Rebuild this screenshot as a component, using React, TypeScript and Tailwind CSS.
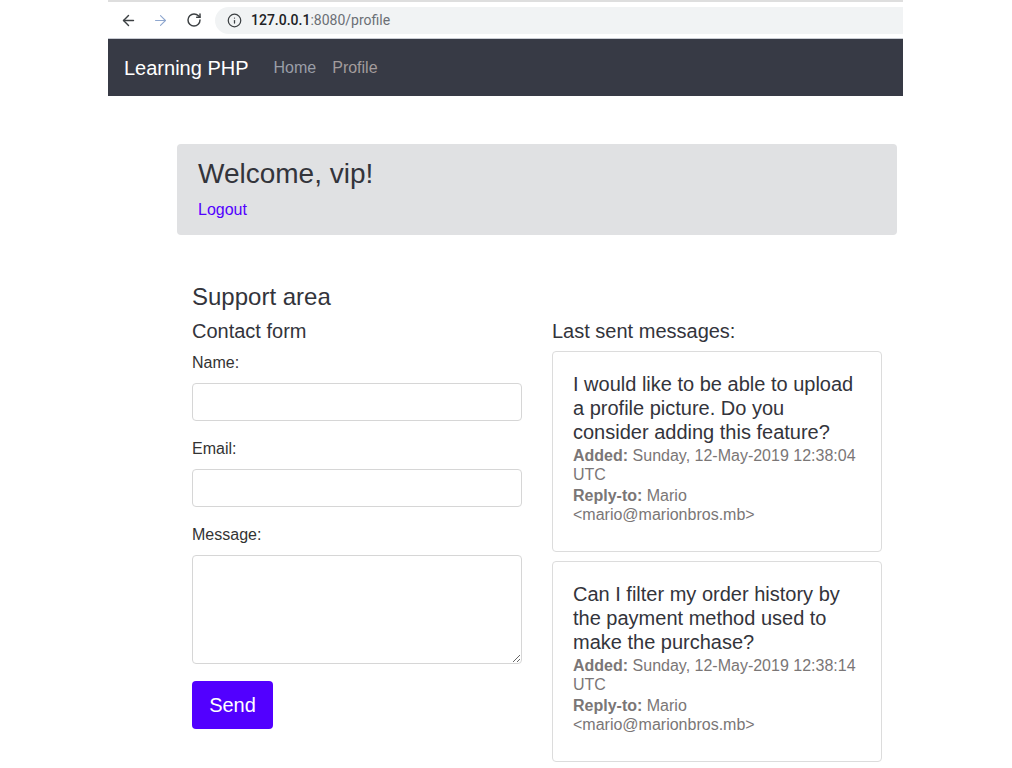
import { ArrowLeft, ArrowRight, RotateCw, Info } from "lucide-react";

const messages = [
  {
    text: "I would like to be able to upload a profile picture. Do you consider adding this feature?",
    added: "Sunday, 12-May-2019 12:38:04 UTC",
  },
  {
    text: "Can I filter my order history by the payment method used to make the purchase?",
    added: "Sunday, 12-May-2019 12:38:14 UTC",
  },
];

function Field({ label, area }: { label: string; area?: boolean }) {
  return (
    <div className={area ? "mb-[17px]" : "mb-[18px]"}>
      <div className="text-[16px] leading-[19px] text-[#333] mb-[11px]">{label}</div>
      {area ? (
        <textarea className="block w-full h-[109px] border border-[#d6d6d6] rounded-[4px] bg-white" />
      ) : (
        <input className="block w-full h-[38px] border border-[#d6d6d6] rounded-[4px] bg-white" />
      )}
    </div>
  );
}

export default function App() {
  return (
    <div className="w-[1012px] h-[768px] bg-white overflow-hidden font-['Liberation_Sans',Arial,sans-serif]">
      <div className="ml-[108px] w-[795px]">
        {/* browser toolbar */}
        <div className="h-[2px] bg-[#dedede]" />
        <div className="h-[37px] flex items-center border-b border-[#c9ccd3]">
          <ArrowLeft size={17} strokeWidth={2} className="ml-[12px] text-[#3c4043]" />
          <ArrowRight size={17} strokeWidth={1.5} className="ml-[15px] text-[#8fa7cf]" />
          <RotateCw size={16} strokeWidth={2.2} className="ml-[17px] text-[#3c4043]" />
          <div className="ml-[13px] flex-1 h-[27px] bg-[#f1f3f4] rounded-l-full flex items-center pl-[12px] font-['Roboto',sans-serif] text-[14px]">
            <Info size={15} strokeWidth={2} className="text-[#3c4043]" />
            <span className="ml-[9px] text-[#202124] font-medium">127.0.0.1</span>
            <span className="text-[#6b6f74]">:8080/profile</span>
          </div>
        </div>
        {/* navbar */}
        <div className="h-[57px] bg-[#373a45] flex items-center pl-[16px]">
          <span className="text-white text-[20px]">Learning PHP</span>
          <span className="ml-[25px] text-[16px] text-[#9a9ea8]">Home</span>
          <span className="ml-[16px] text-[16px] text-[#a39c9c]">Profile</span>
        </div>
      </div>

      <div className="ml-[177px] w-[720px]">
        <div className="mt-[48px] h-[91px] bg-[#e0e1e3] rounded-[4px] pl-[21px] pt-[13px]">
          <h1 className="text-[28px] leading-[34px] text-[#33343b]">Welcome, vip!</h1>
          <a className="block mt-[7px] text-[16px] text-[#5200ff]">Logout</a>
        </div>

        <div className="px-[15px] mt-[47px]">
          <h2 className="text-[24px] leading-[29px] text-[#33343b]">Support area</h2>
          <div className="grid grid-cols-2 gap-x-[30px] mt-[8px]">
            <div>
              <h3 className="text-[20px] leading-[24px] text-[#33343b] mb-[10px]">Contact form</h3>
              <Field label="Name:" />
              <Field label="Email:" />
              <Field label="Message:" area />
              <button className="w-[81px] h-[48px] bg-[#5200ff] text-white text-[20px] rounded-[4px]">
                Send
              </button>
            </div>
            <div>
              <h3 className="text-[20px] leading-[24px] text-[#33343b] mb-[8px]">Last sent messages:</h3>
              {messages.map((m, i) => (
                <div
                  key={i}
                  className="h-[201px] mb-[9px] border border-[#dcdcdc] rounded-[4px] px-[20px] pt-[20px]"
                >
                  <div className="text-[20px] leading-[24px] text-[#33343b]">{m.text}</div>
                  <div className="text-[16px] leading-[19px] text-[#7a7676] mt-[2px]">
                    <b>Added:</b> {m.added}
                  </div>
                  <div className="text-[16px] leading-[19px] text-[#7a7676] mt-[2px]">
                    <b>Reply-to:</b> Mario &lt;mario@marionbros.mb&gt;
                  </div>
                </div>
              ))}
            </div>
          </div>
        </div>
      </div>
    </div>
  );
}
